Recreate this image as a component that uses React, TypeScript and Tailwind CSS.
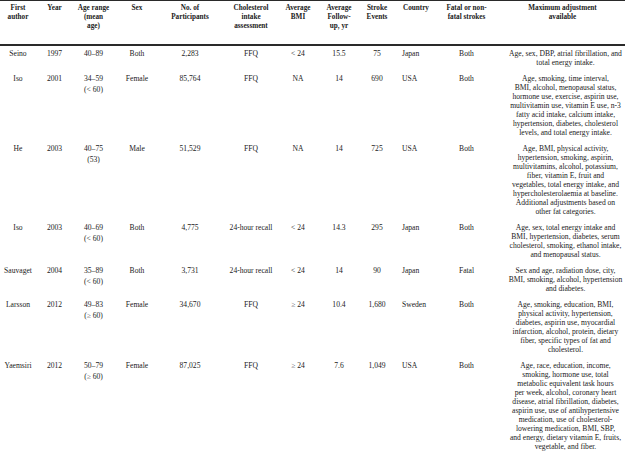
import React from 'react';

interface Study {
  author: string;
  year: string;
  age: string[];
  sex: string;
  participants: string;
  intake: string;
  bmi: string;
  followUp: string;
  strokes: string;
  country: string;
  fatal: string;
  adjustment: string[];
}

const studies: Study[] = [
  {
    author: 'Seino',
    year: '1997',
    age: ['40–89'],
    sex: 'Both',
    participants: '2,283',
    intake: 'FFQ',
    bmi: '< 24',
    followUp: '15.5',
    strokes: '75',
    country: 'Japan',
    fatal: 'Both',
    adjustment: ['Age, sex, DBP, atrial fibrillation, and', 'total energy intake.'],
  },
  {
    author: 'Iso',
    year: '2001',
    age: ['34–59', '(< 60)'],
    sex: 'Female',
    participants: '85,764',
    intake: 'FFQ',
    bmi: 'NA',
    followUp: '14',
    strokes: '690',
    country: 'USA',
    fatal: 'Both',
    adjustment: [
      'Age, smoking, time interval,',
      'BMI, alcohol, menopausal status,',
      'hormone use, exercise, aspirin use,',
      'multivitamin use, vitamin E use, n-3',
      'fatty acid intake, calcium intake,',
      'hypertension, diabetes, cholesterol',
      'levels, and total energy intake.',
    ],
  },
  {
    author: 'He',
    year: '2003',
    age: ['40–75', '(53)'],
    sex: 'Male',
    participants: '51,529',
    intake: 'FFQ',
    bmi: 'NA',
    followUp: '14',
    strokes: '725',
    country: 'USA',
    fatal: 'Both',
    adjustment: [
      'Age, BMI, physical activity,',
      'hypertension, smoking, aspirin,',
      'multivitamins, alcohol, potassium,',
      'fiber, vitamin E, fruit and',
      'vegetables, total energy intake, and',
      'hypercholesterolaemia at baseline.',
      'Additional adjustments based on',
      'other fat categories.',
    ],
  },
  {
    author: 'Iso',
    year: '2003',
    age: ['40–69', '(< 60)'],
    sex: 'Both',
    participants: '4,775',
    intake: '24-hour recall',
    bmi: '< 24',
    followUp: '14.3',
    strokes: '295',
    country: 'Japan',
    fatal: 'Both',
    adjustment: [
      'Age, sex, total energy intake and',
      'BMI, hypertension, diabetes, serum',
      'cholesterol, smoking, ethanol intake,',
      'and menopausal status.',
    ],
  },
  {
    author: 'Sauvaget',
    year: '2004',
    age: ['35–89', '(< 60)'],
    sex: 'Both',
    participants: '3,731',
    intake: '24-hour recall',
    bmi: '< 24',
    followUp: '14',
    strokes: '90',
    country: 'Japan',
    fatal: 'Fatal',
    adjustment: [
      'Sex and age, radiation dose, city,',
      'BMI, smoking, alcohol, hypertension',
      'and diabetes.',
    ],
  },
  {
    author: 'Larsson',
    year: '2012',
    age: ['49–83', '(≥ 60)'],
    sex: 'Female',
    participants: '34,670',
    intake: 'FFQ',
    bmi: '≥ 24',
    followUp: '10.4',
    strokes: '1,680',
    country: 'Sweden',
    fatal: 'Both',
    adjustment: [
      'Age, smoking, education, BMI,',
      'physical activity, hypertension,',
      'diabetes, aspirin use, myocardial',
      'infarction, alcohol, protein, dietary',
      'fiber, specific types of fat and',
      'cholesterol.',
    ],
  },
  {
    author: 'Yaemsiri',
    year: '2012',
    age: ['50–79', '(≥ 60)'],
    sex: 'Female',
    participants: '87,025',
    intake: 'FFQ',
    bmi: '≥ 24',
    followUp: '7.6',
    strokes: '1,049',
    country: 'USA',
    fatal: 'Both',
    adjustment: [
      'Age, race, education, income,',
      'smoking, hormone use, total',
      'metabolic equivalent task hours',
      'per week, alcohol, coronary heart',
      'disease, atrial fibrillation, diabetes,',
      'aspirin use, use of antihypertensive',
      'medication, use of cholesterol-',
      'lowering medication, BMI, SBP,',
      'and energy, dietary vitamin E, fruits,',
      'vegetable, and fiber.',
    ],
  },
];

const headers: string[][] = [
  ['First', 'author'],
  ['Year'],
  ['Age range', '(mean', 'age)'],
  ['Sex'],
  ['No. of', 'Participants'],
  ['Cholesterol', 'intake', 'assessment'],
  ['Average', 'BMI'],
  ['Average', 'Follow-', 'up, yr'],
  ['Stroke', 'Events'],
  ['Country'],
  ['Fatal or non-', 'fatal strokes'],
  ['Maximum adjustment', 'available'],
];

const gridCols =
  'grid grid-cols-[36px_37px_41px_46px_60px_62px_32px_50px_26px_43px_67px_125px]';

function Lines({ lines }: { lines: string[] }) {
  return (
    <>
      {lines.map((l, i) => (
        <div key={i} className="whitespace-nowrap">
          {l}
        </div>
      ))}
    </>
  );
}

export default function App() {
  return (
    <div
      className="w-[625px] h-[453px] bg-white text-[#222] overflow-hidden"
      style={{ fontFamily: '"Liberation Serif", "Times New Roman", serif' }}
    >
      <div
        className={`${gridCols} border-t-[1.5px] border-b-2 border-[#2a2a2a] pt-[3px] pb-[13px] text-[7.2px] leading-[8.9px] font-bold`}
      >
        {headers.map((h, i) => (
          <div key={i} className={i === 9 ? 'text-left pl-[13px]' : 'text-center'}>
            <Lines lines={h} />
          </div>
        ))}
      </div>

      {studies.map((s, idx) => (
        <div
          key={idx}
          className={`${gridCols} text-[7.6px] leading-[9px] pt-[3.6px] ${
            idx === studies.length - 1 ? 'pb-[3px] border-b-2 border-[#2a2a2a]' : 'pb-[3.4px]'
          }`}
        >
          <div className="text-center">{s.author}</div>
          <div className="text-center">{s.year}</div>
          <div className="text-center flex flex-col items-center gap-[1.5px]">
            <Lines lines={s.age} />
          </div>
          <div className="text-center">{s.sex}</div>
          <div className="text-center">{s.participants}</div>
          <div className="text-center">{s.intake}</div>
          <div className="text-center">{s.bmi}</div>
          <div className="text-center">{s.followUp}</div>
          <div className="text-center">{s.strokes}</div>
          <div className="text-left pl-[12px]">{s.country}</div>
          <div className="text-center">{s.fatal}</div>
          <div className="text-center pl-[6px] flex flex-col items-center">
            <Lines lines={s.adjustment} />
          </div>
        </div>
      ))}
    </div>
  );
}
